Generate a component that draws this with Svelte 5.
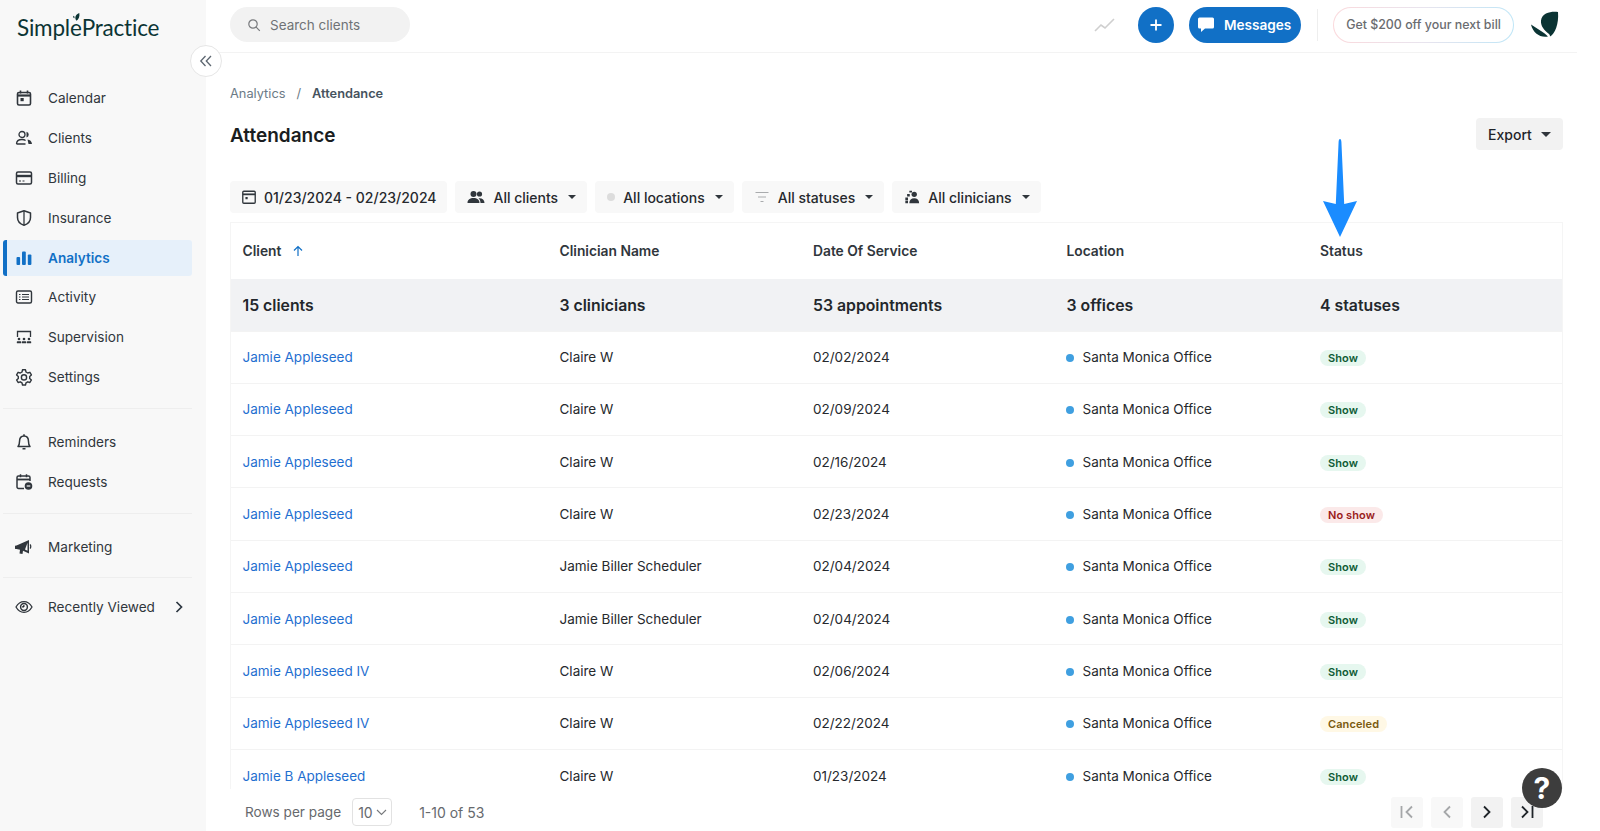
<script>
  const icons = {
    calendar: '<rect x="2.500" y="3.500" width="13" height="12.500" rx="1.500" fill="none" stroke="currentColor" stroke-width="1.600"/><path d="M2.500 6.500h13" stroke="currentColor" stroke-width="2.200"/><path d="M5.500 1.500v3M12.500 1.500v3" stroke="currentColor" stroke-width="1.600"/><rect x="5.500" y="9" width="3.200" height="3.200" fill="currentColor"/>',
    clients: '<circle cx="7" cy="5.500" r="3" fill="none" stroke="currentColor" stroke-width="1.300"/><path d="M1.500 15c0-3 2.300-4.500 5.500-4.500 1.500 0 2.700.3 3.600 1M1.500 15h9" fill="none" stroke="currentColor" stroke-width="1.300"/><path d="M11.500 2.700a3 3 0 0 1 0 5.800zM12.500 10.500c2.500.2 4.300 1.800 4.500 4.500h-3.500z" fill="currentColor"/>',
    billing: '<rect x="1.500" y="3" width="15" height="12" rx="1.500" fill="none" stroke="currentColor" stroke-width="1.500"/><path d="M1.500 7h15" stroke="currentColor" stroke-width="2.400"/><path d="M4 12h2M7.500 12h2" stroke="currentColor" stroke-width="1.200"/>',
    insurance: '<path d="M9 1.800 15.500 4v4.500c0 3.700-2.600 6.500-6.500 7.800-3.900-1.300-6.500-4.100-6.500-7.800V4z" fill="none" stroke="currentColor" stroke-width="1.500" stroke-linejoin="round"/><path d="M9 2v14" stroke="currentColor" stroke-width="1.300"/>',
    analytics: '<rect x="1.500" y="8" width="3.600" height="8" rx="1" fill="currentColor"/><rect x="7" y="2.500" width="3.800" height="13.500" rx="1" fill="currentColor"/><rect x="12.800" y="5.500" width="3.600" height="10.500" rx="1" fill="currentColor"/>',
    activity: '<rect x="1.500" y="3" width="15" height="12" rx="1.500" fill="none" stroke="currentColor" stroke-width="1.400"/><path d="M4 6.500h1.500M7 6.500h7M4 9h1.500M7 9h7M4 11.500h1.500M7 11.500h7" stroke="currentColor" stroke-width="1.200"/>',
    supervision: '<path d="M2.500 9V3.500h13V9" fill="none" stroke="currentColor" stroke-width="1.300"/><g fill="currentColor"><circle cx="4" cy="11" r="1.300"/><circle cx="9" cy="11" r="1.300"/><circle cx="14" cy="11" r="1.300"/><rect x="1.800" y="13.300" width="4.400" height="2" rx=".6"/><rect x="6.800" y="13.300" width="4.400" height="2" rx=".6"/><rect x="11.800" y="13.300" width="4.400" height="2" rx=".6"/></g>',
    settings: '<path d="M7.500 1.800h3l.5 2.200 1.700 1 2.200-.7 1.500 2.600-1.700 1.500v2l1.700 1.500-1.500 2.600-2.200-.7-1.700 1-.5 2.200h-3L7 14.800l-1.700-1-2.200.7-1.500-2.600 1.700-1.500v-2L1.600 6.900l1.500-2.600 2.200.7 1.700-1z" fill="none" stroke="currentColor" stroke-width="1.400" stroke-linejoin="round"/><circle cx="9" cy="9.400" r="2.600" fill="none" stroke="currentColor" stroke-width="1.400"/>',
    reminders: '<path d="M3 13.500c1.200-1.200 1.500-2.500 1.500-5C4.500 5 6.300 3 9 3s4.500 2 4.500 5.500c0 2.500.3 3.800 1.500 5z" fill="none" stroke="currentColor" stroke-width="1.500" stroke-linejoin="round"/><path d="M9 1.200V3M7.500 15.700h3" stroke="currentColor" stroke-width="1.500"/>',
    requests: '<path d="M9 15.500H3.500A1.500 1.500 0 0 1 2 14V4.500A1.500 1.500 0 0 1 3.500 3h10A1.500 1.500 0 0 1 15 4.500V8" fill="none" stroke="currentColor" stroke-width="1.500"/><path d="M2 6.500h13" stroke="currentColor" stroke-width="1.800"/><path d="M5.500 1.300v3M11.500 1.300v3" stroke="currentColor" stroke-width="1.500"/><circle cx="13.500" cy="13" r="3.800" fill="currentColor"/><path d="M11.700 13h3.600" stroke="#f8f8f8" stroke-width="1.200"/>',
    marketing: '<path d="M1.500 7.500 14 2v13.500l-6-2.800-.5 3.300-3-.5.500-3.800-3.500-.7a1.500 1.500 0 0 1-.5-3.500z" fill="currentColor"/><path d="M12.500 4.800v7.900l-2.500-1.100z" fill="#f8f8f8"/><path d="M15 6.500c1 .7 1 3.300 0 4" stroke="currentColor" stroke-width="1.300" fill="none"/>',
    viewed: '<path d="M1 9c2-3.500 4.800-5.300 8-5.300S15 5.500 17 9c-2 3.500-4.800 5.300-8 5.300S3 12.500 1 9z" fill="none" stroke="currentColor" stroke-width="1.300"/><circle cx="9" cy="9" r="3.400" fill="none" stroke="currentColor" stroke-width="1.500"/><path d="M9 7v2H7" stroke="currentColor" stroke-width="1"/>'
  };

  const navGroups = [
    [
      { label: 'Calendar', icon: 'calendar' },
      { label: 'Clients', icon: 'clients' },
      { label: 'Billing', icon: 'billing' },
      { label: 'Insurance', icon: 'insurance' },
      { label: 'Analytics', icon: 'analytics', active: true },
      { label: 'Activity', icon: 'activity' },
      { label: 'Supervision', icon: 'supervision' },
      { label: 'Settings', icon: 'settings' }
    ],
    [
      { label: 'Reminders', icon: 'reminders' },
      { label: 'Requests', icon: 'requests' }
    ],
    [{ label: 'Marketing', icon: 'marketing' }],
    [{ label: 'Recently Viewed', icon: 'viewed', more: true }]
  ];

  const rows = [
    ['Jamie Appleseed', 'Claire W', '02/02/2024', 'Show'],
    ['Jamie Appleseed', 'Claire W', '02/09/2024', 'Show'],
    ['Jamie Appleseed', 'Claire W', '02/16/2024', 'Show'],
    ['Jamie Appleseed', 'Claire W', '02/23/2024', 'No show'],
    ['Jamie Appleseed', 'Jamie Biller Scheduler', '02/04/2024', 'Show'],
    ['Jamie Appleseed', 'Jamie Biller Scheduler', '02/04/2024', 'Show'],
    ['Jamie Appleseed IV', 'Claire W', '02/06/2024', 'Show'],
    ['Jamie Appleseed IV', 'Claire W', '02/22/2024', 'Canceled'],
    ['Jamie B Appleseed', 'Claire W', '01/23/2024', 'Show']
  ];

  const badgeClass = { Show: 'show', 'No show': 'noshow', Canceled: 'canceled' };
</script>

<div class="app">
  <aside class="sidebar">
    <div class="logo">
      Simpl<span class="e">e<svg class="leaf" viewBox="0 0 10 12"><path d="M5 12C2 9 3 3 9 1c1 5-1 9-4 11zM1 8c-1-1-1-2 0-3 1 .6 1.500 2 1 3.500z" fill="#0b3434"/></svg></span>Practice
    </div>
    <button class="collapse" aria-label="Collapse">
      <svg width="14" height="14" viewBox="0 0 14 14" fill="none" stroke="#5c6670" stroke-width="1.300"><path d="M6.500 2 1.800 7l4.700 5M12 2 7.300 7l4.700 5"/></svg>
    </button>

    <nav>
      {#each navGroups as group, g}
        <div class="group" class:first={g === 0}>
          {#each group as item}
            <div class="item" class:active={item.active}>
              <svg class="nav-icon" viewBox="0 0 18 18" width="18" height="18">{@html icons[item.icon]}</svg>
              <span>{item.label}</span>
              {#if item.more}
                <svg class="more" width="10" height="14" viewBox="0 0 10 14" fill="none" stroke="#2c3640" stroke-width="1.700"><path d="m2.500 2 5 5-5 5"/></svg>
              {/if}
            </div>
          {/each}
        </div>
      {/each}
    </nav>
  </aside>

  <div class="main">
    <header class="topbar">
      <div class="search">
        <svg width="14" height="14" viewBox="0 0 14 14" fill="none" stroke="#77797c" stroke-width="1.200"><circle cx="6" cy="6" r="4.200"/><path d="m9.200 9.200 3.600 3.600"/></svg>
        <span>Search clients</span>
      </div>
      <div class="top-right">
        <svg class="trend" width="22" height="16" viewBox="0 0 22 16" fill="none" stroke="#cfcfcf" stroke-width="1.600"><path d="m1 14 6-6 4 3 9-9"/></svg>
        <button class="plus" aria-label="Add">
          <svg width="14" height="14" viewBox="0 0 14 14" stroke="#fff" stroke-width="1.800"><path d="M7 1.500v11M1.500 7h11"/></svg>
        </button>
        <button class="messages">
          <svg width="18" height="18" viewBox="0 0 18 18"><path d="M2.500 1.500h13A1.500 1.500 0 0 1 17 3v8a1.500 1.500 0 0 1-1.500 1.500H8L4 16v-3.500H2.500A1.500 1.500 0 0 1 1 11V3a1.500 1.500 0 0 1 1.500-1.500z" fill="#fff"/></svg>
          Messages
        </button>
        <div class="sep"></div>
        <div class="promo">Get $200 off your next bill</div>
        <svg class="mark" width="28" height="27" viewBox="0 0 28 27" fill="#0b3434"><path d="M27 1C22 0 11 1 10 9.500c-.5 5.500 3 9.500 8 13.500 1 1 1 2 1 2.500C24 23 28 13 27 1z"/><path d="M0 13.500 10 20c2.500 1.600 5 3.500 7 5.500-8 1.500-15-3.500-17-12z"/></svg>
      </div>
    </header>

    <div class="content">
      <div class="crumbs"><span>Analytics</span><i>/</i><b>Attendance</b></div>
      <div class="title-row">
        <h1>Attendance</h1>
        <button class="export">Export <em class="caret"></em></button>
      </div>

      <div class="filters">
        <div class="filter date">
          <svg width="16" height="16" viewBox="0 0 18 18"><rect x="2" y="2.500" width="14" height="13.500" rx="1.200" fill="none" stroke="#30363c" stroke-width="1.500"/><path d="M2 6h14" stroke="#30363c" stroke-width="2"/><rect x="5" y="9" width="2.500" height="2.500" fill="#30363c"/></svg>
          01/23/2024 - 02/23/2024
        </div>
        <div class="filter">
          <svg width="18" height="16" viewBox="0 0 18 16" fill="#30363c"><circle cx="6.500" cy="5" r="3"/><circle cx="12.500" cy="5" r="2.600"/><path d="M0.500 14c0-3.500 2.500-5 6-5s6 1.500 6 5zM13.500 14c0-2-.5-3.500-2-4.800 3.500-.4 6 1.300 6 4.800z"/></svg>
          All clients <em class="caret"></em>
        </div>
        <div class="filter">
          <span class="grey-dot"></span>
          All locations <em class="caret"></em>
        </div>
        <div class="filter">
          <svg width="16" height="14" viewBox="0 0 16 14" stroke="#a9abad" stroke-width="1.200"><path d="M1.500 2.500h13M4 7h8M6.500 11.500h3"/></svg>
          All statuses <em class="caret"></em>
        </div>
        <div class="filter">
          <svg width="16" height="16" viewBox="0 0 18 18" fill="#30363c"><circle cx="11.500" cy="6" r="3"/><path d="M6 16c0-3.500 2.200-5.500 5.500-5.500S17 12.500 17 16z"/><path d="M1.500 9.500h3v3h-3zM1.500 13h3v3h-3zM3.500 5.500h3v3h-3zM6 2h3v2H6z"/></svg>
          All clinicians <em class="caret"></em>
        </div>
      </div>

      <div class="table-wrap">
        <table>
          <colgroup><col class="c1" /><col /><col /><col /><col /></colgroup>
          <thead>
            <tr>
              <th>Client <svg class="sort" width="12" height="12" viewBox="0 0 12 12" fill="none" stroke="#1170c6" stroke-width="1.200"><path d="M6 11V1.500M2 5.500l4-4 4 4"/></svg></th>
              <th>Clinician Name</th>
              <th>Date Of Service</th>
              <th>Location</th>
              <th>Status</th>
            </tr>
            <tr class="summary">
              <td>15 clients</td>
              <td>3 clinicians</td>
              <td>53 appointments</td>
              <td>3 offices</td>
              <td>4 statuses</td>
            </tr>
          </thead>
          <tbody>
            {#each rows as row}
              <tr>
                <td><span class="link">{row[0]}</span></td>
                <td>{row[1]}</td>
                <td>{row[2]}</td>
                <td><span class="dot"></span>Santa Monica Office</td>
                <td><span class="badge {badgeClass[row[3]]}">{row[3]}</span></td>
              </tr>
            {/each}
          </tbody>
        </table>
      </div>

      <div class="pager">
        <span class="rpp">Rows per page</span>
        <div class="select">10
          <svg width="11" height="7" viewBox="0 0 11 7" fill="none" stroke="#77797c" stroke-width="1.100"><path d="m1 1 4.500 4.500L10 1"/></svg>
        </div>
        <span class="count">1-10 of 53</span>
        <div class="pages">
          <button disabled aria-label="First"><svg width="16" height="14" viewBox="0 0 16 14" fill="none" stroke-width="1.800"><path d="M2.500 1v12M13 1.500 7.500 7l5.500 5.500"/></svg></button>
          <button disabled aria-label="Previous"><svg width="16" height="14" viewBox="0 0 16 14" fill="none" stroke-width="1.800"><path d="M11 1.500 5.500 7l5.500 5.500"/></svg></button>
          <button aria-label="Next"><svg width="16" height="14" viewBox="0 0 16 14" fill="none" stroke-width="1.800"><path d="M5 1.500 10.500 7 5 12.500"/></svg></button>
          <button aria-label="Last"><svg width="16" height="14" viewBox="0 0 16 14" fill="none" stroke-width="1.800"><path d="M3 1.500 8.500 7 3 12.500M13.500 1v12"/></svg></button>
        </div>
      </div>
    </div>
  </div>

  <svg class="callout" width="36" height="98" viewBox="0 0 36 98"><path d="M18 0c.8 0 1.300 1 1.400 3l2.800 62L35 62 18 98 1 62l12.800 3L16.600 3c.1-2 .6-3 1.400-3z" fill="#1a8cff"/></svg>
  <button class="help">?</button>
</div>

<style>
  :global(body) {
    margin: 0;
    background: #fff;
    font-family: Inter, "Liberation Sans", sans-serif;
    color: #1f2429;
  }

  button {
    font-family: inherit;
    border: 0;
    cursor: pointer;
  }

  .app {
    display: grid;
    grid-template-columns: 206px 1fr;
    height: 831px;
    overflow: hidden;
    position: relative;
  }

  .sidebar {
    background: #f8f8f8;
    position: relative;
    color: #30363c;
  }

  .logo {
    font-family: Lato, sans-serif;
    font-size: 22.500px;
    color: #0b3434;
    padding: 14px 0 0 17px;
    height: 38px;
    letter-spacing: -0.2px;
  }

  .e {
    position: relative;
  }

  .leaf {
    position: absolute;
    left: 3px;
    top: -2px;
    width: 7px;
    height: 9px;
  }

  .collapse {
    position: absolute;
    left: 190px;
    top: 45px;
    width: 32px;
    height: 32px;
    border-radius: 50%;
    background: #fff;
    border: 1px solid #e6e6e6;
    display: flex;
    align-items: center;
    justify-content: center;
    padding: 0;
    z-index: 2;
  }

  nav {
    padding: 26px 14px 0 3px;
  }

  .group {
    border-top: 1px solid #eeeeee;
    padding: 13px 0 10.500px;
  }

  .group.first {
    border-top: 0;
    padding-top: 0;
    padding-bottom: 11px;
  }

  .group:last-child {
    padding-top: 9px;
  }

  .item {
    height: 40px;
    display: flex;
    align-items: center;
    font-size: 13.600px;
    padding-left: 12px;
    box-sizing: border-box;
  }

  .item.active {
    background: #e6f0fa;
    color: #1170c6;
    font-weight: 600;
    height: 36px;
    margin: 1.500px 0;
    border-left: 4px solid #1170c6;
    border-radius: 3px;
    padding-left: 8px;
  }

  .nav-icon {
    flex: none;
    margin-right: 15px;
    color: #30363c;
  }

  .active .nav-icon {
    color: #1170c6;
  }

  .more {
    margin-left: auto;
    margin-right: 8px;
  }

  .main {
    min-width: 0;
    width: 1371px;
  }

  .topbar {
    height: 53px;
    box-sizing: border-box;
    border-bottom: 1px solid #f3f3f3;
    display: flex;
    align-items: center;
    justify-content: space-between;
    padding: 0 18px 3px 24px;
  }

  .search {
    width: 180px;
    height: 35px;
    background: #f2f2f2;
    border-radius: 18px;
    display: flex;
    align-items: center;
    gap: 9px;
    padding-left: 17px;
    box-sizing: border-box;
    font-size: 13.500px;
    color: #6f7276;
  }

  .top-right {
    display: flex;
    align-items: center;
  }

  .trend {
    margin-right: 22px;
  }

  .plus {
    width: 36px;
    height: 36px;
    border-radius: 50%;
    background: #1170c6;
    padding: 0;
    display: flex;
    align-items: center;
    justify-content: center;
    margin-right: 15px;
  }

  .messages {
    height: 36px;
    width: 112px;
    border-radius: 18px;
    background: #1170c6;
    color: #fff;
    font-size: 13.600px;
    font-weight: 600;
    display: flex;
    align-items: center;
    gap: 9px;
    padding: 0 0 0 8px;
  }

  .sep {
    width: 1px;
    height: 32px;
    background: #eeeeee;
    margin: 0 15px 0 16px;
  }

  .promo {
    height: 36px;
    width: 181px;
    box-sizing: border-box;
    border: 1px solid transparent;
    border-radius: 18px;
    background: linear-gradient(#fff, #fff) padding-box, linear-gradient(90deg, #fbd9dc, #e8e4ee, #bfe6f7) border-box;
    font-size: 12.400px;
    font-weight: 500;
    color: #6a6c70;
    display: flex;
    align-items: center;
    justify-content: center;
  }

  .mark {
    margin-left: 17px;
  }

  .content {
    padding: 0 14px 0 24px;
  }

  .crumbs {
    margin-top: 32px;
    height: 18px;
    font-size: 12.800px;
    line-height: 18px;
    color: #6c7a86;
  }

  .crumbs i {
    font-style: normal;
    margin: 0 11px;
  }

  .crumbs b {
    font-weight: 600;
    color: #46535e;
  }

  .title-row {
    display: flex;
    align-items: center;
    justify-content: space-between;
    margin-top: 16px;
    height: 32px;
  }

  h1 {
    margin: 0;
    font-size: 19px;
    font-weight: 600;
    color: #1a1d20;
  }

  .export {
    height: 32px;
    width: 87px;
    margin-top: -2px;
    background: #f2f2f2;
    border-radius: 4px;
    font-size: 14px;
    font-weight: 500;
    color: #1f2429;
    padding: 0;
    display: flex;
    align-items: center;
    justify-content: center;
    gap: 7px;
  }

  .caret {
    width: 0;
    height: 0;
    border-left: 5px solid transparent;
    border-right: 5px solid transparent;
    border-top: 5px solid #30363c;
    display: inline-block;
    margin-left: 2px;
  }

  .filters {
    display: flex;
    gap: 8px;
    margin-top: 30px;
  }

  .filter {
    height: 32px;
    background: #f8f8f8;
    border-radius: 4px;
    display: flex;
    align-items: center;
    gap: 8px;
    padding: 0 11px 0 12px;
    font-size: 14px;
    font-weight: 500;
    color: #26292d;
  }

  .filter.date {
    gap: 7px;
    padding: 0 11px;
  }

  .filter .caret {
    border-left-width: 4.500px;
    border-right-width: 4.500px;
    border-top-width: 4.500px;
  }

  .grey-dot {
    width: 8px;
    height: 8px;
    border-radius: 50%;
    background: #dcdcdc;
  }

  .table-wrap {
    margin-top: 9px;
    height: 567px;
    overflow: hidden;
    box-sizing: border-box;
    border: 1px solid #f5f5f5;
    border-bottom: 0;
  }

  table {
    width: 100%;
    table-layout: fixed;
    border-collapse: collapse;
    font-size: 13.500px;
    color: #26292d;
  }

  .c1 {
    width: 317px;
  }

  th {
    height: 56px;
    text-align: left;
    font-weight: 600;
    font-size: 13.800px;
    padding: 0 0 0 11.500px;
    color: #30363c;
  }

  td {
    height: 52.300px;
    padding: 0 0 0 11.500px;
    box-sizing: border-box;
  }

  tbody tr {
    border-top: 1px solid #f3f3f3;
  }

  .sort {
    margin-left: 7px;
    vertical-align: -1px;
  }

  .summary td {
    background: #f1f2f4;
    font-size: 15.800px;
    font-weight: 600;
    height: 52px;
    padding-top: 1px;
    color: #23272b;
  }

  .link {
    color: #1f6fd0;
  }

  .dot {
    display: inline-block;
    width: 8px;
    height: 8px;
    border-radius: 50%;
    background: #3f9fe0;
    margin-left: -1px;
    margin-right: 9px;
  }

  .badge {
    display: inline-block;
    font-size: 11px;
    line-height: 16px;
    font-weight: 600;
    padding: 0 8px;
    border-radius: 8px;
    letter-spacing: 0.1px;
    vertical-align: -1px;
  }

  .show {
    background: #e6f7ef;
    color: #0f5c36;
  }

  .noshow {
    background: #fbe9e9;
    color: #9a1c1c;
  }

  .canceled {
    background: #fff8e5;
    color: #7a5a10;
  }

  .pager {
    display: flex;
    align-items: center;
    height: 32px;
    margin-top: 7px;
    padding: 0 20px 0 15px;
    font-size: 14px;
    color: #66696d;
  }

  .rpp {
    font-size: 13.600px;
  }

  .select {
    width: 40px;
    height: 28px;
    box-sizing: border-box;
    border: 1px solid #e2e2e2;
    border-radius: 4px;
    margin-left: 11px;
    display: flex;
    align-items: center;
    justify-content: space-between;
    padding: 0 4px 0 5px;
  }

  .count {
    margin-left: 27px;
  }

  .pages {
    margin-left: auto;
    display: flex;
    gap: 8px;
  }

  .pages button {
    width: 32px;
    height: 31px;
    background: #f2f2f2;
    border-radius: 3px;
    padding: 0;
    display: flex;
    align-items: center;
    justify-content: center;
    stroke: #1f2429;
  }

  .pages button:disabled {
    background: #f8f8f8;
    stroke: #a5a7a9;
  }

  .callout {
    position: absolute;
    left: 1322px;
    top: 139px;
  }

  .help {
    position: absolute;
    left: 1522px;
    top: 768px;
    width: 40px;
    height: 40px;
    border-radius: 50%;
    background: #3d3d3d;
    color: #fff;
    font-size: 30px;
    font-weight: 700;
    padding: 0;
  }
</style>
